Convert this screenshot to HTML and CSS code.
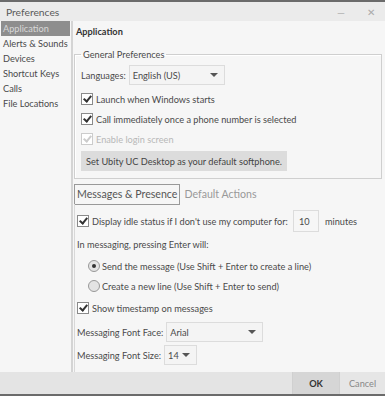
FILE: index.html
```html
<!DOCTYPE html>
<html lang="en">
<head>
    <meta charset="UTF-8">
    <meta name="viewport" content="width=device-width, initial-scale=1.0">
    <title>Preferences</title>
    <link rel="stylesheet" href="styles.css">
</head>
<body>
    <div id="prefWindow">
        <!-- Title Bar -->
        <div id="titleBar">
            <span class="title">Preferences</span>
            <div class="windowButtons">
                <span class="winBtn">&#8212;</span>
                <span class="winBtn">&#10005;</span>
            </div>
        </div>

        <div id="prefBody">
            <!-- Sidebar -->
            <ul id="sidebar">
                <li class="active">Application</li>
                <li>Alerts &amp; Sounds</li>
                <li>Devices</li>
                <li>Shortcut Keys</li>
                <li>Calls</li>
                <li>File Locations</li>
            </ul>

            <!-- Main Panel -->
            <div id="mainPanel">
                <h2>Application</h2>

                <fieldset id="generalPrefs">
                    <legend>General Preferences</legend>
                    <div class="row langRow">
                        <label class="fieldLabel">Languages:</label>
                        <div class="select langSelect">English (US)<span class="arrow"></span></div>
                    </div>
                    <div class="row"><span class="check checked"></span>Launch when Windows starts</div>
                    <div class="row"><span class="check checked"></span>Call immediately once a phone number is selected</div>
                    <div class="row disabled"><span class="check checked"></span>Enable login screen</div>
                    <button class="grayButton">Set Ubity UC Desktop as your default softphone.</button>
                </fieldset>

                <!-- Tabs -->
                <div id="tabs">
                    <span class="tab active">Messages &amp; Presence</span>
                    <span class="tab">Default Actions</span>
                </div>

                <div id="tabContent">
                    <div class="row idleRow">
                        <span class="check checked"></span>Display idle status if I don't use my computer for:
                        <span class="numInput">10</span>
                        <span>minutes</span>
                    </div>
                    <div class="row tallRow">In messaging, pressing Enter will:</div>
                    <div class="row radioRow"><span class="radio selected"></span>Send the message (Use Shift + Enter to create a line)</div>
                    <div class="row radioRow"><span class="radio"></span>Create a new line (Use Shift + Enter to send)</div>
                    <div class="row tallRow"><span class="check checked"></span>Show timestamp on messages</div>
                    <div class="row faceRow">
                        <label class="fieldLabel">Messaging Font Face:</label>
                        <div class="select faceSelect">Arial<span class="arrow"></span></div>
                    </div>
                    <div class="row sizeRow">
                        <label class="fieldLabel">Messaging Font Size:</label>
                        <div class="select sizeSelect">14<span class="arrow"></span></div>
                    </div>
                </div>
            </div>
        </div>

        <!-- Footer Buttons -->
        <div id="footer">
            <button class="footBtn okBtn">OK</button>
            <button class="footBtn">Cancel</button>
        </div>
    </div>
</body>
</html>
```

FILE: styles.css
```css
body {
    margin: 0;
    padding: 0;
    font-family: Lato, "Open Sans", sans-serif;
    font-size: 9.2px;
    color: #4a4a4a;
    background-color: #f5f5f5;
}

#prefWindow {
    width: 385px;
    height: 396px;
    display: flex;
    flex-direction: column;
    box-sizing: border-box;
    border-top: 2px solid #6b6b6b;
    border-bottom: 2px solid #6b6b6b;
    background-color: #f6f6f6;
}

/* Title Bar */
#titleBar {
    height: 19px;
    flex-shrink: 0;
    display: flex;
    align-items: center;
    justify-content: space-between;
    background-color: #ebebeb;
    padding: 0 10px 0 6px;
}

.title {
    font-size: 10.3px;
    color: #5a5a5a;
}

.windowButtons {
    display: flex;
    gap: 22px;
    color: #aaa;
    font-size: 10px;
}

#prefBody {
    flex: 1;
    display: flex;
}

/* Sidebar */
#sidebar {
    list-style: none;
    margin: 0;
    padding: 0 1px;
    width: 69px;
    border-right: 2px solid #d4d4d4;
}

#sidebar li {
    height: 15px;
    line-height: 15px;
    padding-left: 2px;
    white-space: nowrap;
}

#sidebar li.active {
    background-color: #8e8e8e;
    color: #d8d8d8;
}

/* Main Panel */
#mainPanel {
    flex: 1;
    padding: 4px 3px 0 1px;
    display: flex;
    flex-direction: column;
}

h2 {
    margin: 0 0 0 2px;
    font-size: 9.2px;
    font-weight: bold;
    color: #333;
    line-height: 14px;
}

fieldset {
    margin: 10px 0 0 0;
    padding: 4px 4px 7px 6px;
    border: 1px solid #cfcfcf;
    box-shadow: inset 1px 1px 0 #fff;
}

legend {
    padding: 0 2px;
    margin-left: 0;
}

.row {
    display: flex;
    align-items: center;
    height: 20px;
    white-space: nowrap;
}

.langRow {
    height: 22px;
    margin-bottom: 3px;
}

.disabled {
    color: #b8b8b8;
}

.fieldLabel {
    margin-right: 3px;
}

.select {
    position: relative;
    height: 20px;
    line-height: 20px;
    box-sizing: border-box;
    border: 1px solid #dcdcdc;
    background-color: #f4f4f4;
    padding-left: 3px;
}

.langSelect {
    width: 96px;
}

.faceSelect {
    width: 97px;
}

.sizeSelect {
    width: 33px;
}

.arrow {
    position: absolute;
    right: 6px;
    top: 7px;
    border-left: 4px solid transparent;
    border-right: 4px solid transparent;
    border-top: 4px solid #555;
}

.check {
    width: 10px;
    height: 10px;
    border: 1px solid #8a8a8a;
    background-color: #fff;
    margin-right: 3px;
    position: relative;
    flex-shrink: 0;
}

.check.checked::after {
    content: "";
    position: absolute;
    left: 3px;
    top: 0px;
    width: 3px;
    height: 6px;
    border-right: 2px solid #333;
    border-bottom: 2px solid #333;
    transform: rotate(40deg);
}

.disabled .check {
    border-color: #ccc;
}

.disabled .check.checked::after {
    border-color: #ccc;
}

.grayButton {
    align-self: flex-start;
    margin-top: 2px;
    height: 20px;
    padding: 0 5px;
    border: none;
    background-color: #dcdcdc;
    color: #444;
    font-family: inherit;
    font-size: 9.2px;
}

/* Tabs */
#tabs {
    display: flex;
    align-items: center;
    margin-top: 5px;
    height: 20px;
}

.tab {
    font-size: 10.6px;
    color: #999;
    padding: 0 2px;
}

.tab.active {
    color: #555;
    border: 1px solid #999;
    height: 19px;
    line-height: 19px;
    margin-right: 2px;
}

#tabContent {
    flex: 1;
    border-left: 1px solid #d8d8d8;
    padding: 6px 0 0 2px;
}

.idleRow {
    height: 22px;
}

.numInput {
    width: 26px;
    height: 22px;
    line-height: 22px;
    box-sizing: border-box;
    border: 1px solid #dcdcdc;
    margin: 0 6px 0 5px;
    padding-left: 5px;
}

.tallRow {
    height: 24px;
}

.radioRow {
    padding-left: 11px;
}

.radio {
    width: 10px;
    height: 10px;
    border-radius: 50%;
    border: 1px solid #999;
    background-color: #e4e4e4;
    margin-right: 2px;
    position: relative;
}

.radio.selected::after {
    content: "";
    position: absolute;
    left: 3px;
    top: 3px;
    width: 4px;
    height: 4px;
    border-radius: 50%;
    background-color: #333;
}

.faceRow {
    height: 24px;
}

.sizeRow {
    height: 22px;
}

/* Footer */
#footer {
    height: 22px;
    flex-shrink: 0;
    display: flex;
    justify-content: flex-end;
    background-color: #e4e4e4;
}

.footBtn {
    width: 46px;
    border: none;
    border-left: 1px solid #d0d0d0;
    background-color: #e6e6e6;
    color: #888;
    font-family: inherit;
    font-size: 9.2px;
}

.okBtn {
    width: 47px;
    background-color: #d6d6d6;
    color: #333;
    font-weight: bold;
}
```
